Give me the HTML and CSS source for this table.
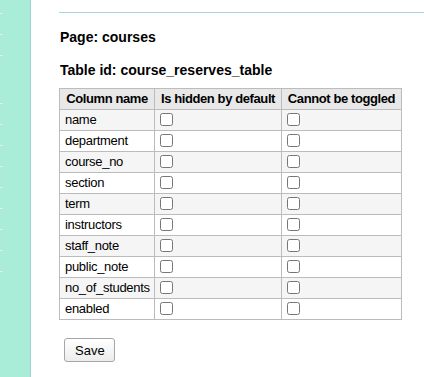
FILE: index.html
```html
<!DOCTYPE html>
<html>
<head>
<meta charset="utf-8">
<link rel="stylesheet" href="styles.css">
</head>
<body>
<div class="wrap">
    <div class="sidebar">
        <ul class="menu">
            <li></li><li></li><li></li>
            <li class="gap"></li><li></li><li></li><li></li><li></li><li></li><li></li><li></li><li></li>
        </ul>
    </div>
    <div class="main">
        <hr class="rule">
        <h3>Page: courses</h3>
        <h3>Table id: course_reserves_table</h3>
        <table class="columns">
            <colgroup>
                <col class="c-name"><col class="c-hidden"><col class="c-toggle">
            </colgroup>
            <thead>
                <tr><th>Column name</th><th>Is hidden by default</th><th>Cannot be toggled</th></tr>
            </thead>
            <tbody>
                <tr><td>name</td><td><input type="checkbox"></td><td><input type="checkbox"></td></tr>
                <tr><td>department</td><td><input type="checkbox"></td><td><input type="checkbox"></td></tr>
                <tr><td>course_no</td><td><input type="checkbox"></td><td><input type="checkbox"></td></tr>
                <tr><td>section</td><td><input type="checkbox"></td><td><input type="checkbox"></td></tr>
                <tr><td>term</td><td><input type="checkbox"></td><td><input type="checkbox"></td></tr>
                <tr><td>instructors</td><td><input type="checkbox"></td><td><input type="checkbox"></td></tr>
                <tr><td>staff_note</td><td><input type="checkbox"></td><td><input type="checkbox"></td></tr>
                <tr><td>public_note</td><td><input type="checkbox"></td><td><input type="checkbox"></td></tr>
                <tr><td>no_of_students</td><td><input type="checkbox"></td><td><input type="checkbox"></td></tr>
                <tr><td>enabled</td><td><input type="checkbox"></td><td><input type="checkbox"></td></tr>
            </tbody>
        </table>
        <div class="actions">
            <input type="button" class="save" value="Save">
        </div>
    </div>
</div>
</body>
</html>
```
FILE: styles.css
```css
body{
    margin: 0;
    font-family: "Liberation Sans", Arial, sans-serif;
    font-size: 13px;
    color: #000;
    background-color: #fff;
}

.wrap{
    display: flex;
    min-height: 377px;
}

.sidebar{
    width: 30px;
    background-color: #a9ecd7;
    border-right: 1px solid #a3cfd6;
    flex-shrink: 0;
}

.menu{
    list-style: none;
    margin: 0;
    padding: 13px 0 0 0;
    display: flex;
    flex-direction: column;
    gap: 20px;
}

.menu li{
    width: 3px;
    height: 1px;
    background-color: #e6eeea;
}

.menu li.gap{
    margin-top: 27px;
}

.main{
    flex: 1;
    padding: 12px 0 0 28px;
}

.rule{
    border: none;
    border-top: 1px solid #a8d9da;
    margin: 0 0 0 0;
}

h3{
    font-size: 14px;
    font-weight: bold;
    margin: 0;
    padding-left: 1px;
    line-height: 17px;
}

h3:first-of-type{
    margin-top: 16px;
}

h3 + h3{
    margin-top: 16px;
}

.columns{
    border-collapse: collapse;
    table-layout: fixed;
    width: 343px;
    margin-top: 9px;
    border: 1px solid #bcbcbc;
    letter-spacing: -0.3px;
}

.c-name{ width: 95px; }
.c-hidden{ width: 127px; }
.c-toggle{ width: 120px; }

.columns th, .columns td{
    border: 1px solid #bcbcbc;
    padding: 2px 3px 2px 5px;
    line-height: 16px;
    text-align: left;
    white-space: nowrap;
    overflow: hidden;
}

.columns th{
    background-color: #e8e8e8;
    text-align: center;
    padding: 2px 2px;
    letter-spacing: -0.4px;
}

.columns tbody tr:nth-child(odd){
    background-color: #f5f5f5;
}

.columns input[type=checkbox]{
    margin: 0;
    width: 13px;
    height: 13px;
    vertical-align: -2px;
}

.actions{
    margin-top: 18px;
    padding-left: 5px;
}

.save{
    font-family: "Liberation Sans", Arial, sans-serif;
    font-size: 13px;
    padding: 3px 10px;
    height: 24px;
    width: 51px;
    border: 1px solid #a6a6a6;
    border-radius: 3px;
    background: linear-gradient(#ffffff, #ececec);
    color: #000;
}
```
